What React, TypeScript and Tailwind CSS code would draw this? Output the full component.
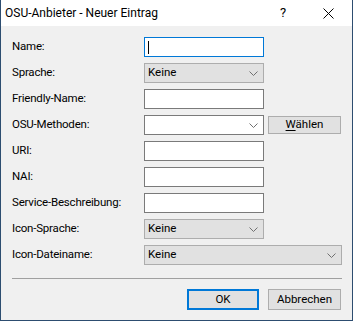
import React from 'react';

const font = { fontFamily: 'Roboto, "Liberation Sans", sans-serif' };

function TextBox({ focused = false }: { focused?: boolean }) {
  return (
    <div
      className={`h-[20px] w-[120px] bg-white border ${focused ? 'border-[#0078d7]' : 'border-[#7a7a7a]'} flex items-center pl-[3px]`}
    >
      {focused && <div className="w-px h-[13px] bg-black" />}
    </div>
  );
}

function Chevron({ color = '#707070' }: { color?: string }) {
  return (
    <svg width="9" height="5" viewBox="0 0 9 5" className="shrink-0">
      <path d="M0.5 0.5 L4.5 4.5 L8.5 0.5" fill="none" stroke={color} strokeWidth="1" />
    </svg>
  );
}

function Combo({ value, width = 'w-[120px]', editable = false }: { value?: string; width?: string; editable?: boolean }) {
  return (
    <div
      className={`h-[20px] ${width} border flex items-center justify-between pl-[3px] pr-[5px] ${editable ? 'bg-white border-[#7a7a7a]' : 'bg-[#e1e1e1] border-[#adadad]'}`}
    >
      <span className="text-[11.5px] text-black leading-none">{value}</span>
      <Chevron />
    </div>
  );
}

function Row({ label, children }: { label: string; children: React.ReactNode }) {
  return (
    <div className="flex items-center h-[20px]">
      <div className="w-[132px] text-[11.5px] text-black leading-none tracking-[-0.2px]">{label}</div>
      {children}
    </div>
  );
}

export default function App() {
  return (
    <div
      className="w-[353px] h-[321px] bg-[#f0f0f0] border-x border-b border-[#2d4d70] flex flex-col select-none"
      style={font}
    >
      {/* title bar */}
      <div className="h-[26px] bg-white flex items-center shrink-0">
        <span className="pl-[4px] text-[12px] text-black flex-1">OSU-Anbieter - Neuer Eintrag</span>
        <span className="w-[20px] text-center text-[13px] text-black mr-[30px]">?</span>
        <svg width="11" height="11" viewBox="0 0 11 11" className="mr-[18px]">
          <path d="M0.5 0.5 L10.5 10.5 M10.5 0.5 L0.5 10.5" stroke="#000" strokeWidth="1" />
        </svg>
      </div>

      {/* form */}
      <div className="flex flex-col gap-[6px] pt-[11px] pl-[11px]">
        <Row label="Name:">
          <TextBox focused />
        </Row>
        <Row label="Sprache:">
          <Combo value="Keine" />
        </Row>
        <Row label="Friendly-Name:">
          <TextBox />
        </Row>
        <Row label="OSU-Methoden:">
          <Combo editable />
          <button className="ml-[4px] h-[18px] w-[73px] bg-[#e1e1e1] border border-[#adadad] text-[11.5px] text-black leading-none">
            <span className="underline underline-offset-2">W</span>ählen
          </button>
        </Row>
        <Row label="URI:">
          <TextBox />
        </Row>
        <Row label="NAI:">
          <TextBox />
        </Row>
        <Row label="Service-Beschreibung:">
          <TextBox />
        </Row>
        <Row label="Icon-Sprache:">
          <Combo value="Keine" />
        </Row>
        <Row label="Icon-Dateiname:">
          <Combo value="Keine" width="w-[198px]" />
        </Row>
      </div>

      <div className="mt-[13px] ml-[11px] mr-[10px] h-px bg-[#a0a0a0]" />

      <div className="flex justify-end gap-[9px] pr-[11px] pt-[10px]">
        <button className="h-[21px] w-[72px] bg-[#e1e1e1] border-2 border-[#0078d7] text-[11.5px] text-black leading-none">
          OK
        </button>
        <button className="h-[21px] w-[73px] bg-[#e1e1e1] border border-[#adadad] text-[11.5px] text-black leading-none">
          Abbrechen
        </button>
      </div>
    </div>
  );
}
